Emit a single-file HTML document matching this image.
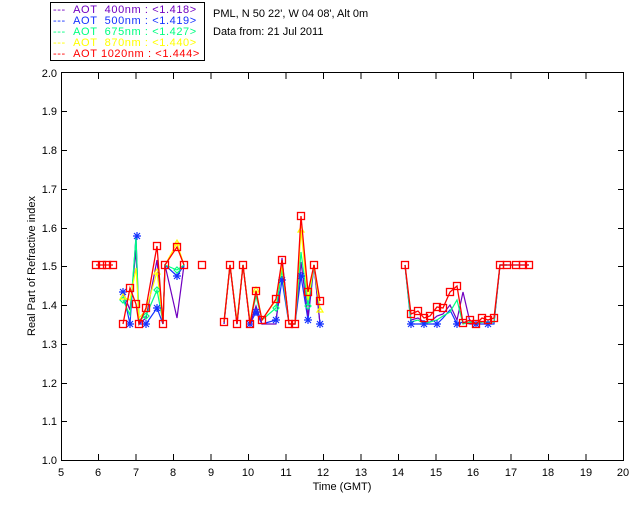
<!DOCTYPE html>
<html><head><meta charset="utf-8"><style>
body{margin:0;background:#fff;width:640px;height:512px;overflow:hidden}
svg{display:block}
text{font-family:"Liberation Sans",sans-serif;font-size:11px}
.lg text{letter-spacing:0.6px}
</style></head><body>
<svg width="640" height="512" viewBox="0 0 640 512" xmlns="http://www.w3.org/2000/svg">
<defs>
<g id="sq"><rect x="-3.5" y="-3.5" width="7" height="7" fill="none" stroke="#f00" stroke-width="1.3"/></g>
<g id="st"><path d="M-4 0H4M0 -4V4M-3 -3L3 3M-3 3L3 -3" stroke="#1432ff" stroke-width="1.2"/></g>
<g id="tr"><path d="M0 -3L3 2H-3Z" fill="none" stroke="#ff0" stroke-width="1.2"/></g>
<g id="dm"><path d="M0 -3L3 0L0 3L-3 0Z" fill="none" stroke="#00ff80" stroke-width="1.2"/></g>
</defs>
<rect x="50.5" y="2.5" width="154" height="58" fill="none" stroke="#000"/>
<g class="lg">
<text x="53" y="13" fill="#7000c0">--- &#160;AOT &#160;400nm : &lt;1.418&gt;</text>
<text x="53" y="24" fill="#1432ff">--- &#160;AOT &#160;500nm : &lt;1.419&gt;</text>
<text x="53" y="35" fill="#00ff80">--- &#160;AOT &#160;675nm : &lt;1.427&gt;</text>
<text x="53" y="46" fill="#ffff00">--- &#160;AOT &#160;870nm : &lt;1.440&gt;</text>
<text x="53" y="57" fill="#ff0000">--- &#160;AOT 1020nm : &lt;1.444&gt;</text>
</g>
<text x="213" y="17">PML, N 50 22', W 04 08', Alt 0m</text>
<text x="213" y="35">Data from: 21 Jul 2011</text>
<rect x="61.5" y="72.5" width="562" height="388" fill="none" stroke="#000"/>
<g stroke="#000">
<path d="M98.5 460v-6M136 460v-6M173.5 460v-6M211 460v-6M248.5 460v-6M286 460v-6M323.5 460v-6M361 460v-6M398.5 460v-6M436 460v-6M473.5 460v-6M511 460v-6M548.5 460v-6M586 460v-6"/>
<path d="M98.5 73v6M136 73v6M173.5 73v6M211 73v6M248.5 73v6M286 73v6M323.5 73v6M361 73v6M398.5 73v6M436 73v6M473.5 73v6M511 73v6M548.5 73v6M586 73v6"/>
<path d="M61 111.5h6M61 150.5h6M61 189.5h6M61 228.5h6M61 266.5h6M61 305.5h6M61 344.5h6M61 383.5h6M61 421.5h6"/>
<path d="M624 111.5h-6M624 150.5h-6M624 189.5h-6M624 228.5h-6M624 266.5h-6M624 305.5h-6M624 344.5h-6M624 383.5h-6M624 421.5h-6"/>
</g>
<g text-anchor="end">
<text x="57" y="77">2.0</text><text x="57" y="115">1.9</text><text x="57" y="154">1.8</text><text x="57" y="193">1.7</text><text x="57" y="232">1.6</text><text x="57" y="270">1.5</text><text x="57" y="309">1.4</text><text x="57" y="348">1.3</text><text x="57" y="387">1.2</text><text x="57" y="425">1.1</text><text x="57" y="464">1.0</text>
</g>
<g text-anchor="middle">
<text x="61" y="476">5</text><text x="98" y="476">6</text><text x="136" y="476">7</text><text x="173" y="476">8</text><text x="211" y="476">9</text><text x="248" y="476">10</text><text x="286" y="476">11</text><text x="323" y="476">12</text><text x="361" y="476">13</text><text x="398" y="476">14</text><text x="436" y="476">15</text><text x="473" y="476">16</text><text x="511" y="476">17</text><text x="548" y="476">18</text><text x="586" y="476">19</text><text x="623" y="476">20</text>
<text x="342" y="490">Time (GMT)</text>
<text transform="translate(35,266) rotate(-90)">Real Part of Refractive index</text>
</g>
<g fill="none" stroke-width="1.2">
<polyline stroke="#7000c0" points="123,292 130,310 136,250 139,324 146,318 157,260 163,324 165,265 177,318 184,265"/>
<polyline stroke="#1432ff" points="123,292 130,324 136,236 139,324 146,324 157,308 163,324 165,265 177,276 184,265"/>
<polyline stroke="#00ff80" points="123,300 130,315 136,238 139,320 146,316 157,290 163,322 165,265 177,270 184,265"/>
<polyline stroke="#ffff00" points="123,297 130,300 136,268 139,318 146,310 157,272 163,322 165,265 177,243 184,265"/>
<polyline stroke="#1432ff" points="224,324 230,265 237,324 243,265 250,324 256,312 262,324 276,320 282,280 289,324 295,324 301,276 308,320 314,265 320,324"/>
<polyline stroke="#7000c0" points="224,324 230,265 237,324 243,265 250,324 256,306 262,324 276,324 282,258 289,324 295,324 301,262 308,316 314,265 320,324"/>
<polyline stroke="#00ff80" points="224,322 230,265 237,322 243,265 250,322 256,296 262,320 276,308 282,270 289,324 295,324 301,252 308,306 314,265 320,310"/>
<polyline stroke="#ffff00" points="224,322 230,265 237,322 243,265 250,322 256,290 262,320 276,300 282,265 289,324 295,324 301,230 308,300 314,265 320,310"/>
<polyline stroke="#1432ff" points="405,265 411,324 418,324 424,324 430,324 437,324 443,318 450,310 457,324 463,322 470,324 476,324 482,324 488,324 494,324 500,265 507,265 516,265 523,265 529,265"/>
<polyline stroke="#7000c0" points="405,265 411,320 418,318 424,322 430,322 437,316 443,314 450,305 457,320 463,292 470,322 476,324 482,322 488,322 494,322 500,265 507,265"/>
<polyline stroke="#00ff80" points="405,265 411,322 418,320 424,324 430,322 437,320 443,316 450,312 457,300 463,324 470,322 476,324 482,322 488,322 494,322 500,265 507,265"/>
</g>
<g>
<use href="#st" x="123" y="292"/><use href="#st" x="130" y="324"/><use href="#st" x="137" y="236"/><use href="#st" x="146" y="324"/><use href="#st" x="157" y="308"/><use href="#st" x="177" y="276"/>
<use href="#st" x="250" y="324"/><use href="#st" x="256" y="312"/><use href="#st" x="276" y="320"/><use href="#st" x="282" y="280"/><use href="#st" x="301" y="276"/><use href="#st" x="308" y="320"/><use href="#st" x="320" y="324"/>
<use href="#st" x="411" y="324"/><use href="#st" x="424" y="324"/><use href="#st" x="437" y="324"/><use href="#st" x="457" y="324"/><use href="#st" x="476" y="324"/><use href="#st" x="488" y="324"/>
<use href="#dm" x="123" y="300"/><use href="#dm" x="146" y="316"/><use href="#dm" x="157" y="290"/><use href="#dm" x="177" y="270"/><use href="#dm" x="276" y="308"/><use href="#dm" x="308" y="306"/>
<use href="#tr" x="123" y="297"/><use href="#tr" x="157" y="272"/><use href="#tr" x="177" y="243"/><use href="#tr" x="301" y="230"/><use href="#tr" x="320" y="310"/><use href="#tr" x="256" y="290"/>
</g>
<g fill="none" stroke="#f00" stroke-width="1.3">
<polyline points="96,265 102,265 107,265 113,265"/>
<polyline points="123,324 130,288 136,304 139,324 146,308 157,246 163,324 165,265 177,247 184,265"/>
<polyline points="224,322 230,265 237,324 243,265 250,324 256,291 262,320 276,299 282,260 289,324 295,324 301,216 308,292 314,265 320,301"/>
<polyline points="405,265 411,314 418,311 424,318 430,316 437,307 443,308 450,292 457,286 463,323 470,320 476,324 482,318 488,320 494,318 500,265 507,265 516,265 523,265 529,265"/>
</g>
<g>
<use href="#sq" x="96" y="265"/><use href="#sq" x="102" y="265"/><use href="#sq" x="107" y="265"/><use href="#sq" x="113" y="265"/>
<use href="#sq" x="123" y="324"/><use href="#sq" x="130" y="288"/><use href="#sq" x="136" y="304"/><use href="#sq" x="139" y="324"/><use href="#sq" x="146" y="308"/><use href="#sq" x="157" y="246"/><use href="#sq" x="163" y="324"/><use href="#sq" x="165" y="265"/><use href="#sq" x="177" y="247"/><use href="#sq" x="184" y="265"/><use href="#sq" x="202" y="265"/>
<use href="#sq" x="224" y="322"/><use href="#sq" x="230" y="265"/><use href="#sq" x="237" y="324"/><use href="#sq" x="243" y="265"/><use href="#sq" x="250" y="324"/><use href="#sq" x="256" y="291"/><use href="#sq" x="262" y="320"/><use href="#sq" x="276" y="299"/><use href="#sq" x="282" y="260"/><use href="#sq" x="289" y="324"/><use href="#sq" x="295" y="324"/><use href="#sq" x="301" y="216"/><use href="#sq" x="308" y="292"/><use href="#sq" x="314" y="265"/><use href="#sq" x="320" y="301"/>
<use href="#sq" x="405" y="265"/><use href="#sq" x="411" y="314"/><use href="#sq" x="418" y="311"/><use href="#sq" x="424" y="318"/><use href="#sq" x="430" y="316"/><use href="#sq" x="437" y="307"/><use href="#sq" x="443" y="308"/><use href="#sq" x="450" y="292"/><use href="#sq" x="457" y="286"/><use href="#sq" x="463" y="323"/><use href="#sq" x="470" y="320"/><use href="#sq" x="476" y="324"/><use href="#sq" x="482" y="318"/><use href="#sq" x="488" y="320"/><use href="#sq" x="494" y="318"/><use href="#sq" x="500" y="265"/><use href="#sq" x="507" y="265"/><use href="#sq" x="516" y="265"/><use href="#sq" x="523" y="265"/><use href="#sq" x="529" y="265"/>
</g>
</svg>
</body></html>
